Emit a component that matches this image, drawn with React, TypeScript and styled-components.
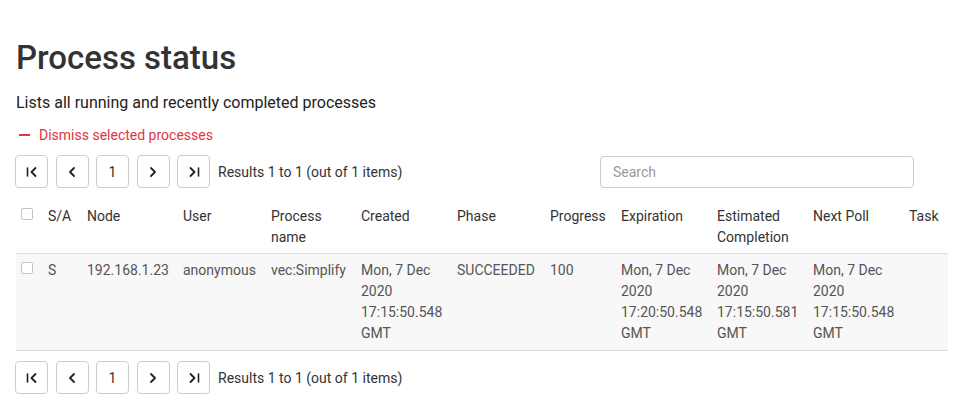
import React from "react";
import styled, { createGlobalStyle } from "styled-components";

const GlobalStyle = createGlobalStyle`
  html, body {
    margin: 0;
    padding: 0;
    background: #ffffff;
  }
  body {
    font-family: Roboto, "Liberation Sans", Arial, sans-serif;
    color: #333333;
  }
`;

const Page = styled.div`
  display: flex;
  flex-direction: column;
  padding: 0 5px 0 15px;
`;

const Title = styled.h1`
  margin: 39px 0 0 1px;
  font-size: 33px;
  line-height: 38px;
  font-weight: 500;
  color: #333333;
`;

const Subtitle = styled.p`
  margin: 14px 0 0 1px;
  font-size: 16px;
  line-height: 24px;
  color: #222222;
`;

const DismissLink = styled.a`
  display: flex;
  align-items: center;
  gap: 9px;
  margin: 10px 0 0 4px;
  font-size: 14px;
  line-height: 20px;
  color: #dc3545;
  cursor: pointer;
`;

const Dash = styled.span`
  width: 11px;
  height: 2px;
  background: #dc3545;
`;

const Toolbar = styled.div<{ $top: number }>`
  display: flex;
  align-items: center;
  margin-top: ${(p) => p.$top}px;
`;

const PagerButton = styled.button`
  width: 33px;
  height: 33px;
  margin-right: 7.5px;
  padding: 0;
  display: flex;
  align-items: center;
  justify-content: center;
  background: #ffffff;
  border: 1px solid #cccccc;
  border-radius: 4px;
  font-family: inherit;
  font-size: 14px;
  color: #333333;
  cursor: pointer;
`;

const ResultText = styled.span`
  margin-left: 0.5px;
  font-size: 14px;
  color: #333333;
`;

const SearchInput = styled.input`
  margin-left: auto;
  margin-right: 34px;
  width: 314px;
  height: 32px;
  box-sizing: border-box;
  padding: 0 12px;
  border: 1px solid #cccccc;
  border-radius: 4px;
  font-family: inherit;
  font-size: 14px;
  color: #333333;
  &::placeholder {
    color: #999999;
  }
`;

const Table = styled.table`
  margin: 13px 0 0 1px;
  width: 932px;
  table-layout: fixed;
  border-collapse: collapse;
  font-size: 14px;
  line-height: 21px;
`;

const HeadCell = styled.th`
  padding: 5px 5px 5px;
  text-align: left;
  vertical-align: top;
  font-weight: 400;
  color: #333333;
  border-bottom: 1px solid #dddddd;
`;

const BodyRow = styled.tr`
  background: #f8f8f8;
  border-bottom: 1px solid #dddddd;
`;

const Cell = styled.td`
  padding: 6px 5px;
  vertical-align: top;
  color: #555555;
`;

const Check = styled.input`
  appearance: none;
  display: block;
  margin: 2px 0 0;
  width: 12px;
  height: 12px;
  border: 1px solid #c4c4c4;
  border-radius: 2px;
  background: #ffffff;
`;

const Icon = ({ kind }: { kind: "first" | "prev" | "next" | "last" }) => {
  const chevron =
    kind === "first" || kind === "prev" ? "M9 3 L5 7 L9 11" : "M5 3 L9 7 L5 11";
  const bar =
    kind === "first" ? "M2.5 3 V11" : kind === "last" ? "M11.5 3 V11" : null;
  const shift = kind === "first" ? 1.5 : kind === "last" ? -1.5 : 0;
  return (
    <svg width="14" height="14" viewBox="0 0 14 14" fill="none">
      <g transform={`translate(${shift} 0)`}>
        <path d={chevron} stroke="#222" strokeWidth="1.8" strokeLinecap="round" strokeLinejoin="round" />
      </g>
      {bar && <path d={bar} stroke="#222" strokeWidth="1.6" strokeLinecap="round" />}
    </svg>
  );
};

const Pager = () => (
  <>
    <PagerButton aria-label="First page">
      <Icon kind="first" />
    </PagerButton>
    <PagerButton aria-label="Previous page">
      <Icon kind="prev" />
    </PagerButton>
    <PagerButton>1</PagerButton>
    <PagerButton aria-label="Next page">
      <Icon kind="next" />
    </PagerButton>
    <PagerButton aria-label="Last page">
      <Icon kind="last" />
    </PagerButton>
    <ResultText>Results 1 to 1 (out of 1 items)</ResultText>
  </>
);

const columns = [
  { key: "check", label: "", width: 27 },
  { key: "sa", label: "S/A", width: 39 },
  { key: "node", label: "Node", width: 96 },
  { key: "user", label: "User", width: 88 },
  { key: "name", label: "Process name", width: 90 },
  { key: "created", label: "Created", width: 96 },
  { key: "phase", label: "Phase", width: 93 },
  { key: "progress", label: "Progress", width: 71 },
  { key: "expiration", label: "Expiration", width: 96 },
  { key: "estimated", label: "Estimated Completion", width: 96 },
  { key: "poll", label: "Next Poll", width: 96 },
  { key: "task", label: "Task", width: 44 },
];

const processes = [
  {
    id: "p1",
    sa: "S",
    node: "192.168.1.23",
    user: "anonymous",
    name: "vec:Simplify",
    created: "Mon, 7 Dec 2020 17:15:50.548 GMT",
    phase: "SUCCEEDED",
    progress: "100",
    expiration: "Mon, 7 Dec 2020 17:20:50.548 GMT",
    estimated: "Mon, 7 Dec 2020 17:15:50.581 GMT",
    poll: "Mon, 7 Dec 2020 17:15:50.548 GMT",
    task: "",
  },
];

export default function App() {
  return (
    <>
      <GlobalStyle />
      <Page>
        <Title>Process status</Title>
        <Subtitle>Lists all running and recently completed processes</Subtitle>
        <DismissLink>
          <Dash />
          Dismiss selected processes
        </DismissLink>
        <Toolbar $top={10}>
          <Pager />
          <SearchInput placeholder="Search" />
        </Toolbar>
        <Table>
          <colgroup>
            {columns.map((c) => (
              <col key={c.key} style={{ width: c.width }} />
            ))}
          </colgroup>
          <thead>
            <tr>
              {columns.map((c) =>
                c.key === "check" ? (
                  <HeadCell key={c.key}>
                    <Check type="checkbox" />
                  </HeadCell>
                ) : (
                  <HeadCell key={c.key}>{c.label}</HeadCell>
                ),
              )}
            </tr>
          </thead>
          <tbody>
            {processes.map((p) => (
              <BodyRow key={p.id}>
                <Cell>
                  <Check type="checkbox" />
                </Cell>
                <Cell>{p.sa}</Cell>
                <Cell>{p.node}</Cell>
                <Cell>{p.user}</Cell>
                <Cell>{p.name}</Cell>
                <Cell>{p.created}</Cell>
                <Cell>{p.phase}</Cell>
                <Cell>{p.progress}</Cell>
                <Cell>{p.expiration}</Cell>
                <Cell>{p.estimated}</Cell>
                <Cell>{p.poll}</Cell>
                <Cell>{p.task}</Cell>
              </BodyRow>
            ))}
          </tbody>
        </Table>
        <Toolbar $top={10}>
          <Pager />
        </Toolbar>
      </Page>
    </>
  );
}
